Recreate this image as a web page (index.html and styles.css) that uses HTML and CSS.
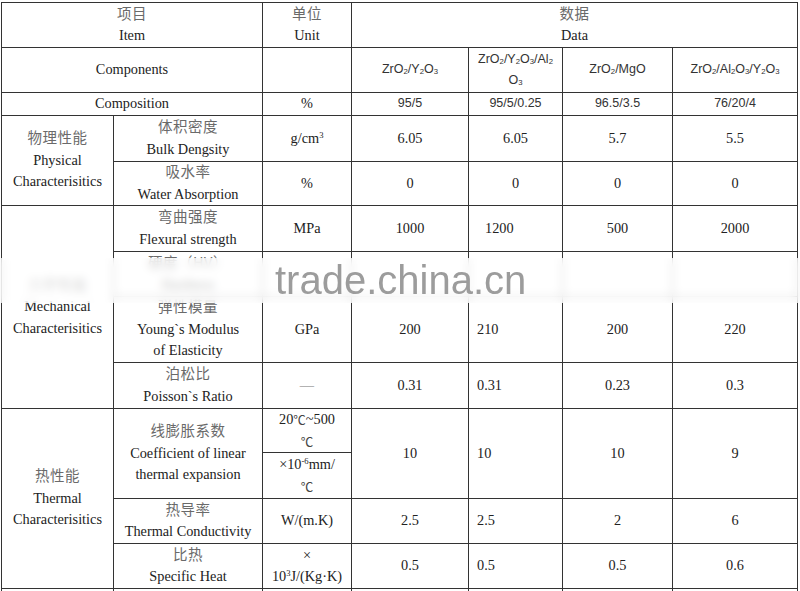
FILE: index.html
```html
<!DOCTYPE html>
<html lang="zh">
<head>
<meta charset="utf-8">
<title>Zirconia properties</title>
<link rel="stylesheet" href="styles.css">
</head>
<body>
<div class="sheet">
<table class="spec">
<colgroup>
<col class="c1"><col class="c2"><col class="c3"><col class="c4"><col class="c5"><col class="c6"><col class="c7">
</colgroup>
<tr class="r-head">
  <td colspan="2"><span class="zh">项目</span><br>Item</td>
  <td><span class="zh">单位</span><br>Unit</td>
  <td colspan="4"><span class="zh">数据</span><br>Data</td>
</tr>
<tr class="r-comp">
  <td colspan="2">Components</td>
  <td></td>
  <td class="sans">ZrO<sub>2</sub>/Y<sub>2</sub>O<sub>3</sub></td>
  <td class="sans">ZrO<sub>2</sub>/Y<sub>2</sub>O<sub>3</sub>/Al<sub>2</sub><br>O<sub>3</sub></td>
  <td class="sans">ZrO<sub>2</sub>/MgO</td>
  <td class="sans">ZrO<sub>2</sub>/Al<sub>2</sub>O<sub>3</sub>/Y<sub>2</sub>O<sub>3</sub></td>
</tr>
<tr class="r-compo">
  <td colspan="2">Composition</td>
  <td>%</td>
  <td class="sans num">95/5</td>
  <td class="sans num">95/5/0.25</td>
  <td class="sans num">96.5/3.5</td>
  <td class="sans num">76/20/4</td>
</tr>
<tr class="r-bulk">
  <td rowspan="2"><span class="zh">物理性能</span><br>Physical<br>Characterisitics</td>
  <td><span class="zh">体积密度</span><br>Bulk Dengsity</td>
  <td>g/cm<sup>3</sup></td>
  <td>6.05</td><td>6.05</td><td>5.7</td><td>5.5</td>
</tr>
<tr class="r-water">
  <td><span class="zh">吸水率</span><br>Water Absorption</td>
  <td>%</td>
  <td>0</td><td>0</td><td>0</td><td>0</td>
</tr>
<tr class="r-flex">
  <td rowspan="4"><span class="zh">力学性能</span><br>Mechanical<br>Characterisitics</td>
  <td><span class="zh">弯曲强度</span><br>Flexural strength</td>
  <td>MPa</td>
  <td>1000</td><td class="l16">1200</td><td>500</td><td>2000</td>
</tr>
<tr class="r-hard">
  <td><span class="zh">硬度（HV）</span><br>Hardness</td>
  <td></td>
  <td></td><td></td><td></td><td></td>
</tr>
<tr class="r-young">
  <td><span class="zh">弹性模量</span><br>Young`s Modulus<br>of Elasticity</td>
  <td>GPa</td>
  <td>200</td><td class="l8">210</td><td>200</td><td>220</td>
</tr>
<tr class="r-poisson">
  <td><span class="zh">泊松比</span><br>Poisson`s Ratio</td>
  <td class="dash">—</td>
  <td>0.31</td><td class="l8">0.31</td><td>0.23</td><td>0.3</td>
</tr>
<tr class="r-exp-a">
  <td rowspan="4"><span class="zh">热性能</span><br>Thermal<br>Characterisitics</td>
  <td rowspan="2"><span class="zh">线膨胀系数</span><br>Coefficient of linear<br>thermal expansion</td>
  <td>20<span class="deg">℃</span>~500<br><span class="deg">℃</span></td>
  <td rowspan="2">10</td><td rowspan="2" class="l8">10</td><td rowspan="2">10</td><td rowspan="2">9</td>
</tr>
<tr class="r-exp-b">
  <td>×10<sup>-6</sup>mm/<br><span class="deg">℃</span></td>
</tr>
<tr class="r-cond">
  <td><span class="zh">热导率</span><br>Thermal Conductivity</td>
  <td>W/(m.K)</td>
  <td>2.5</td><td class="l8">2.5</td><td>2</td><td>6</td>
</tr>
<tr class="r-heat">
  <td><span class="zh">比热</span><br>Specific Heat</td>
  <td>×<br>10<sup>3</sup>J/(Kg·K)</td>
  <td>0.5</td><td class="l8">0.5</td><td>0.5</td><td>0.6</td>
</tr>
<tr class="r-more">
  <td></td><td></td><td></td><td></td><td></td><td></td><td></td>
</tr>
</table>
</div>
<div class="watermark"><span class="wm-text">trade.china.cn</span></div>
</body>
</html>
```
FILE: styles.css
```css
html, body {
  margin: 0;
  padding: 0;
  background: #fff;
}
body {
  width: 800px;
  height: 591px;
  overflow: hidden;
  position: relative;
  color: #222;
  font-family: "Liberation Serif", "Noto Sans CJK SC", serif;
  font-size: 14.3px;
}
.sheet {
  padding: 2px 0 0 1px;
}
.spec {
  border-collapse: collapse;
  table-layout: fixed;
  width: 797px;
}
.spec td {
  border: 1px solid #333;
  padding: 0;
  text-align: center;
  vertical-align: middle;
  line-height: 21.5px;
  white-space: nowrap;
}
.c1 { width: 112px; }
.c2 { width: 149px; }
.c3 { width: 89px; }
.c4 { width: 117px; }
.c5 { width: 94px; }
.c6 { width: 110px; }
.c7 { width: 125px; }

.r-head { height: 45px; }
.r-comp { height: 45px; }
.r-compo { height: 23px; }
.r-bulk { height: 46px; }
.r-water { height: 44px; }
.r-flex { height: 46px; }
.r-hard { height: 45px; }
.r-young { height: 66px; }
.r-poisson { height: 46px; }
.r-exp-a { height: 44px; }
.r-exp-b { height: 46px; }
.r-cond { height: 45px; }
.r-heat { height: 45px; }
.r-more { height: 45px; }

.zh {
  font-family: "Noto Sans CJK SC", sans-serif;
  font-size: 14.5px;
  line-height: 18px;
  color: #6a6a6a;
  letter-spacing: 0.5px;
  vertical-align: top;
}
.deg {
  font-family: "Noto Sans CJK SC", sans-serif;
  font-size: 12.5px;
  color: #444;
  vertical-align: top;
}
.sans {
  font-family: "Liberation Sans", "Noto Sans", sans-serif;
  font-size: 12.5px;
  color: #333;
}
.sans sub {
  font-size: 0.62em;
  vertical-align: -1px;
  line-height: 0;
}
sup {
  font-size: 0.6em;
  vertical-align: 0.6em;
  line-height: 0;
}
.spec td.l8 {
  text-align: left;
  padding-left: 8px;
}
.spec td.l16 {
  text-align: left;
  padding-left: 16px;
}
.dash {
  color: #777;
}

.watermark {
  position: absolute;
  left: 0;
  top: 258px;
  width: 800px;
  height: 45px;
  background: rgba(255, 255, 255, 0.72);
  -webkit-backdrop-filter: blur(4px);
  backdrop-filter: blur(4px);
}
.wm-text {
  display: block;
  padding-left: 275px;
  font-family: "Liberation Sans", Arial, sans-serif;
  font-size: 40px;
  line-height: 45px;
  color: #9c9c9c;
}
```
